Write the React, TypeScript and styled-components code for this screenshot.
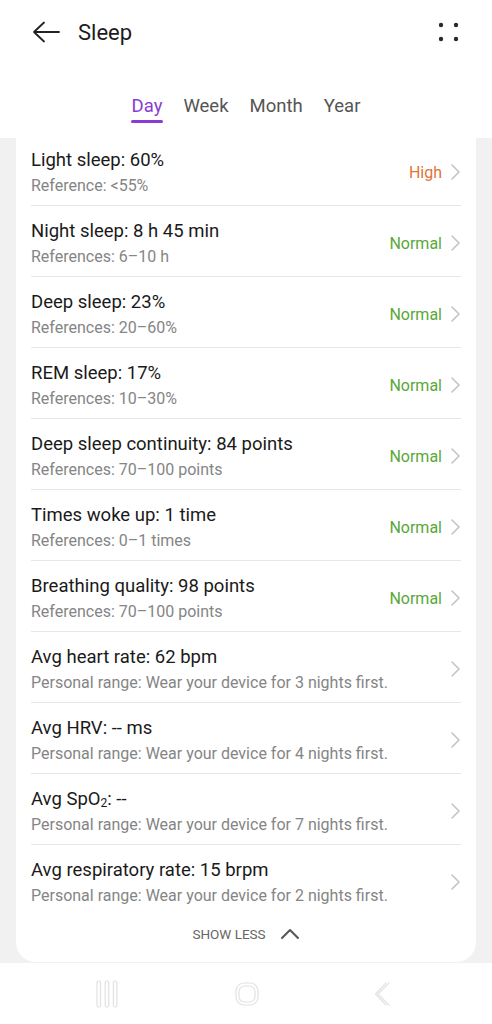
import React from "react";
import styled, { createGlobalStyle } from "styled-components";

const Global = createGlobalStyle`
  html, body { margin: 0; padding: 0; background: #ffffff; }
  body { font-family: Roboto, "Noto Sans", "Liberation Sans", sans-serif; -webkit-font-smoothing: antialiased; }
  * { box-sizing: border-box; }
`;

const Page = styled.div`
  width: 492px;
  height: 1024px;
  display: flex;
  flex-direction: column;
  overflow: hidden;
  background: #ffffff;
`;

const Header = styled.header`
  flex-shrink: 0;
  height: 138px;
  display: flex;
  flex-direction: column;
  background: #ffffff;
`;

const TopBar = styled.div`
  height: 64px;
  display: flex;
  align-items: center;
  padding: 0 0 0 32px;
`;

const IconButton = styled.button`
  border: none;
  background: none;
  padding: 0;
  display: flex;
  align-items: center;
  justify-content: center;
  cursor: pointer;
`;

const Title = styled.h1`
  margin: 0 0 0 18px;
  font-size: 22px;
  font-weight: 400;
  color: #1c1c1c;
  flex: 1;
`;

const MoreButton = styled(IconButton)`
  margin-right: 32px;
`;

const Tabs = styled.nav`
  display: flex;
  justify-content: center;
  gap: 21px;
  margin-top: 24px;
`;

const Tab = styled.button<{ $active?: boolean }>`
  border: none;
  background: none;
  padding: 0;
  font-family: inherit;
  font-size: 18.5px;
  line-height: 28px;
  color: ${(p) => (p.$active ? "#8a3bd1" : "#555555")};
  position: relative;
  height: 35px;
  &::after {
    content: "";
    display: ${(p) => (p.$active ? "block" : "none")};
    position: absolute;
    left: -1px;
    right: -1px;
    bottom: 0;
    height: 3px;
    border-radius: 2px;
    background: #8a3bd1;
  }
`;

const Body = styled.main`
  flex: 1;
  background: #f1f1f1;
  padding: 0 16px 1px;
`;

const Card = styled.section`
  background: #ffffff;
  border-radius: 0 0 20px 20px;
  padding: 0 15px 10px;
`;

const Row = styled.div<{ $first?: boolean; $last?: boolean }>`
  display: flex;
  align-items: center;
  padding: ${(p) => (p.$first ? "11px" : "14px")} 0 ${(p) => (p.$last ? "11px" : "10px")};
  border-bottom: ${(p) => (p.$last ? "none" : "1px solid #e6e6e6")};
`;

const RowText = styled.div`
  flex: 1;
  display: flex;
  flex-direction: column;
  gap: 6px;
`;

const RowTitle = styled.div`
  font-size: 18.5px;
  line-height: 22px;
  color: #1a1a1a;
  sub {
    font-size: 12px;
    vertical-align: -2px;
    line-height: 0;
  }
`;

const RowSub = styled.div`
  font-size: 16px;
  line-height: 18px;
  color: #858585;
`;

const Status = styled.span<{ $tone: "high" | "normal" }>`
  font-size: 16px;
  color: ${(p) => (p.$tone === "high" ? "#e07438" : "#58a83a")};
  margin-right: 7px;
`;

const ShowLess = styled.button`
  width: 100%;
  height: 36px;
  border: none;
  background: none;
  display: flex;
  align-items: center;
  justify-content: center;
  gap: 14px;
  font-family: inherit;
  font-size: 13.5px;
  color: #666666;
`;

const NavBar = styled.footer`
  flex-shrink: 0;
  height: 62px;
  background: #ffffff;
  display: flex;
  align-items: center;
  justify-content: space-between;
  padding: 0 100px 0 95px;
`;

const Chevron = () => (
  <svg width="12" height="18" viewBox="0 0 12 18">
    <path d="M3 2 L10 9 L3 16" fill="none" stroke="#c4c4c4" strokeWidth="1.6" strokeLinecap="round" strokeLinejoin="round" />
  </svg>
);

type Item = {
  title: React.ReactNode;
  sub: string;
  status?: { label: string; tone: "high" | "normal" };
};

const items: Item[] = [
  { title: "Light sleep: 60%", sub: "Reference: <55%", status: { label: "High", tone: "high" } },
  { title: "Night sleep: 8 h 45 min", sub: "References: 6–10 h", status: { label: "Normal", tone: "normal" } },
  { title: "Deep sleep: 23%", sub: "References: 20–60%", status: { label: "Normal", tone: "normal" } },
  { title: "REM sleep: 17%", sub: "References: 10–30%", status: { label: "Normal", tone: "normal" } },
  { title: "Deep sleep continuity: 84 points", sub: "References: 70–100 points", status: { label: "Normal", tone: "normal" } },
  { title: "Times woke up: 1 time", sub: "References: 0–1 times", status: { label: "Normal", tone: "normal" } },
  { title: "Breathing quality: 98 points", sub: "References: 70–100 points", status: { label: "Normal", tone: "normal" } },
  { title: "Avg heart rate: 62 bpm", sub: "Personal range: Wear your device for 3 nights first." },
  { title: "Avg HRV: -- ms", sub: "Personal range: Wear your device for 4 nights first." },
  { title: <>Avg SpO<sub>2</sub>: --</>, sub: "Personal range: Wear your device for 7 nights first." },
  { title: "Avg respiratory rate: 15 brpm", sub: "Personal range: Wear your device for 2 nights first." },
];

export default function App() {
  return (
    <>
      <Global />
      <Page>
        <Header>
          <TopBar>
            <IconButton aria-label="Back">
              <svg width="28" height="24" viewBox="0 0 28 24">
                <path d="M27 12 H3 M12 2.5 L2 12 L12 21.5" fill="none" stroke="#222" strokeWidth="1.8" strokeLinecap="round" strokeLinejoin="round" />
              </svg>
            </IconButton>
            <Title>Sleep</Title>
            <MoreButton aria-label="More">
              <svg width="22" height="20" viewBox="0 0 22 20">
                <circle cx="3" cy="3" r="2.2" fill="#2a2a2a" />
                <circle cx="18" cy="3" r="2.2" fill="#2a2a2a" />
                <circle cx="3" cy="17" r="2.2" fill="#2a2a2a" />
                <circle cx="18" cy="17" r="2.2" fill="#2a2a2a" />
              </svg>
            </MoreButton>
          </TopBar>
          <Tabs>
            <Tab $active>Day</Tab>
            <Tab>Week</Tab>
            <Tab>Month</Tab>
            <Tab>Year</Tab>
          </Tabs>
        </Header>
        <Body>
          <Card>
            {items.map((it, i) => (
              <Row key={i} $first={i === 0} $last={i === items.length - 1}>
                <RowText>
                  <RowTitle>{it.title}</RowTitle>
                  <RowSub>{it.sub}</RowSub>
                </RowText>
                {it.status && <Status $tone={it.status.tone}>{it.status.label}</Status>}
                <Chevron />
              </Row>
            ))}
            <ShowLess>
              SHOW LESS
              <svg width="20" height="12" viewBox="0 0 20 12">
                <path d="M2 10 L10 2 L18 10" fill="none" stroke="#555" strokeWidth="2" strokeLinecap="round" strokeLinejoin="round" />
              </svg>
            </ShowLess>
          </Card>
        </Body>
        <NavBar>
          <svg width="24" height="30" viewBox="0 0 24 30">
            <g fill="none" stroke="#e2e2e2" strokeWidth="1.2">
              <rect x="2" y="2" width="3.5" height="26" rx="1.5" />
              <rect x="10.2" y="2" width="3.5" height="26" rx="1.5" />
              <rect x="18.4" y="2" width="3.5" height="26" rx="1.5" />
            </g>
          </svg>
          <svg width="26" height="26" viewBox="0 0 26 26">
            <rect x="2" y="2" width="22" height="22" rx="8" fill="none" stroke="#e2e2e2" strokeWidth="1.2" />
            <rect x="5" y="5" width="16" height="16" rx="5.5" fill="none" stroke="#e2e2e2" strokeWidth="1.2" />
          </svg>
          <svg width="18" height="26" viewBox="0 0 18 26">
            <path d="M15 2 L4 13 L15 24 M12 2 L1.5 13 L12 24" fill="none" stroke="#e2e2e2" strokeWidth="1.2" strokeLinecap="round" strokeLinejoin="round" />
          </svg>
        </NavBar>
      </Page>
    </>
  );
}
